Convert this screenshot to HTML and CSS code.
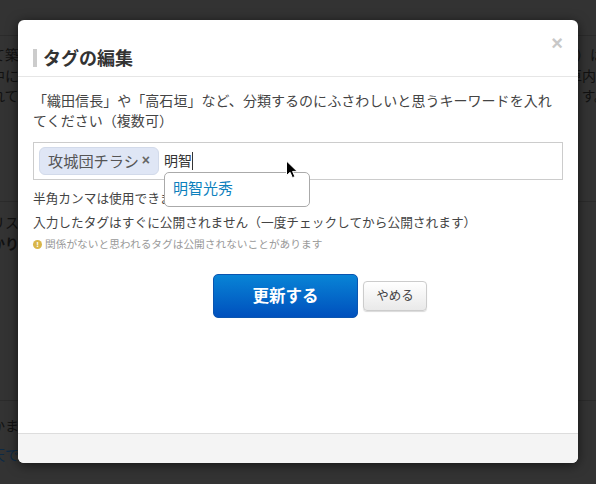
FILE: index.html
```html
<!DOCTYPE html>
<html lang="ja">
<head>
<meta charset="utf-8">
<title>タグの編集</title>
<link rel="stylesheet" href="styles.css">
</head>
<body>
<div class="page">
  <section class="bg-block bg-first">
    <div class="bg-row bg-r1"><span>て築</span><span>）は</span></div>
    <div class="bg-row bg-r2"><span>中に</span><span>車内</span></div>
    <div class="bg-row bg-r3"><span>れて</span><span>す。</span></div>
  </section>
  <section class="bg-block bg-second">
    <div class="bg-row"><span>リス</span></div>
    <div class="bg-row bg-bold"><span>かり</span></div>
  </section>
  <section class="bg-block bg-third">
    <div class="bg-row"><span>かま</span></div>
    <div class="bg-row bg-link"><span>天で</span></div>
  </section>
</div>
<div class="modal">
  <button class="close" type="button">×</button>
  <header class="modal-header"><h2 class="modal-title">タグの編集</h2></header>
  <div class="modal-body">
    <p class="lead">「織田信長」や「高石垣」など、分類するのにふさわしいと思うキーワードを入れてください（複数可）</p>
    <div class="tag-wrap">
      <div class="tag-input">
        <span class="chip"><span class="chip-label">攻城団チラシ</span><span class="chip-x">×</span></span>
        <span class="typed">明智</span>
      </div>
      <div class="suggest">明智光秀</div>
      <svg class="cursor" width="14" height="20" viewBox="0 0 14 20"><path d="M1.5 1v14.5l3.6-3.2 2.3 5.4 2.5-1.1-2.3-5.2h4.6z" fill="#000" stroke="#fff" stroke-width="1"/></svg>
    </div>
    <p class="hint">半角カンマは使用できません</p>
    <p class="hint hint-second">入力したタグはすぐに公開されません（一度チェックしてから公開されます）</p>
    <p class="note"><span class="note-icon">!</span>関係がないと思われるタグは公開されないことがあります</p>
    <div class="actions">
      <button class="btn-primary" type="button">更新する</button>
      <button class="btn-cancel" type="button">やめる</button>
    </div>
  </div>
  <footer class="modal-footer"></footer>
</div>
</body>
</html>
```
FILE: styles.css
```css
* { box-sizing: border-box; }
html, body { margin: 0; height: 100%; }
body {
  background: #333;
  overflow: hidden;
  font-family: "Liberation Sans", "Noto Sans CJK JP", sans-serif;
  color: #333;
}
.page { width: 596px; height: 484px; display: flex; flex-direction: column; color: #111; font-size: 14px; }
.bg-block { border-top: 1px solid #2b2b2b; }
.bg-first { margin-top: 35px; height: 166px; padding-top: 9px; }
.bg-second { height: 199px; padding-top: 11px; }
.bg-third { padding-top: 15px; }
.bg-row { display: flex; justify-content: space-between; line-height: 20px; margin-bottom: 1px; margin-left: -9px; }
.bg-r1 { margin-right: -8px; }
.bg-r3 { margin-right: -12px; margin-top: -1px; }
.bg-bold { font-weight: bold; }
.bg-third .bg-row + .bg-row { margin-top: 9px; }
.bg-link { color: #0d2a45; }
.modal {
  position: absolute;
  left: 18px;
  top: 20px;
  width: 560px;
  height: 443px;
  background: #fff;
  border-radius: 6px;
  box-shadow: 0 2px 12px rgba(0, 0, 0, .6);
  display: flex;
  flex-direction: column;
  overflow: hidden;
}
.close {
  position: absolute;
  right: 15px;
  top: 11px;
  border: 0;
  padding: 0;
  background: none;
  color: #c8c8c8;
  font: bold 20px/24px "Liberation Sans", sans-serif;
}
.modal-header { height: 57px; padding: 29px 15px 0; border-bottom: 1px solid #e6e6e6; flex: none; }
.modal-title {
  margin: 0;
  height: 18px;
  line-height: 20px;
  font-size: 18px;
  font-weight: bold;
  color: #333;
  border-left: 4px solid #ccc;
  padding-left: 6px;
}
.modal-body { flex: 1; padding: 14px 15px 0; }
.lead { margin: 0; font-size: 14px; line-height: 20px; color: #444; letter-spacing: .04px; }
.tag-wrap { position: relative; margin-top: 11px; }
.tag-input {
  height: 38px;
  border: 1px solid #ccc;
  padding: 3px 5px;
  display: flex;
  align-items: center;
  gap: 5px;
  font-size: 14px;
}
.chip {
  display: flex;
  align-items: center;
  height: 28px;
  width: 120px;
  padding: 0 0 2px 8px;
  background: #dfe6f5;
  border: 1px solid #d2daea;
  border-radius: 6px;
  font-size: 15.2px;
  color: #555;
  white-space: nowrap;
}
.chip-x { margin-left: 3px; font-weight: bold; font-size: 14px; color: #666; }
.typed { border-right: 1px solid #333; line-height: 18px; height: 18px; color: #333; }
.suggest {
  position: absolute;
  left: 131px;
  top: 30px;
  width: 146px;
  height: 35px;
  padding: 0 8px;
  background: #fff;
  border: 1px solid #aaa;
  border-radius: 5px;
  font-size: 15px;
  line-height: 32px;
  color: #0c80bd;
}
.cursor { position: absolute; left: 252px; top: 18px; }
.hint { margin: 9px 0 0; font-size: 12.7px; line-height: 20px; color: #444; }
.hint-second { margin-top: 4px; }
.note { display: flex; align-items: center; gap: 3px; margin: 2px 0 0; font-size: 10.7px; line-height: 18px; color: #999; }
.note-icon {
  width: 9px;
  height: 9px;
  border-radius: 50%;
  background: #d9b64a;
  color: #fff;
  font-size: 8px;
  font-weight: bold;
  line-height: 9px;
  text-align: center;
}
.actions { display: flex; align-items: center; justify-content: center; gap: 5px; margin-top: 21px; padding-left: 44px; }
.btn-primary {
  width: 145px;
  height: 44px;
  border: 1px solid #0a55b0;
  border-radius: 5px;
  background: linear-gradient(#0884d6, #0050bd);
  color: #fff;
  font: bold 16.5px/1 "Liberation Sans", "Noto Sans CJK JP", sans-serif;
}
.btn-cancel {
  width: 64px;
  height: 30px;
  border: 1px solid #ccc;
  border-radius: 4px;
  background: linear-gradient(#fff, #e9e9e9);
  box-shadow: 0 1px 1px rgba(0, 0, 0, .15);
  color: #444;
  font: 12.5px/1 "Liberation Sans", "Noto Sans CJK JP", sans-serif;
}
.modal-footer { height: 30px; flex: none; background: #f4f4f4; border-top: 1px solid #ddd; }
```
